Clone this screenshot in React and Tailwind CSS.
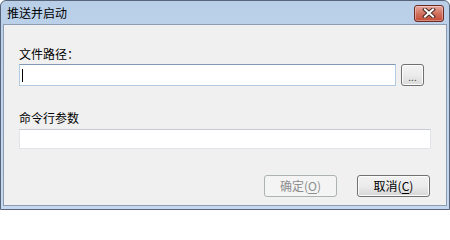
import React from "react";

const font = { fontFamily: '"Microsoft YaHei", "Noto Sans CJK SC", "Noto Sans", sans-serif' };

function CloseButton() {
  return (
    <div className="w-[30px] h-[17px] rounded-[3px] border border-[#6b2a22] bg-gradient-to-b from-[#e6a89c] via-[#d2705f] to-[#c24a35] flex items-center justify-center shadow-[inset_0_0_0_1px_rgba(255,255,255,0.35)]">
      <svg width="14" height="10" viewBox="0 0 14 10">
        <path d="M3 1.5 L11 8.5 M11 1.5 L3 8.5" stroke="#4a2a26" strokeWidth="4" strokeLinecap="square" />
        <path d="M3 1.5 L11 8.5 M11 1.5 L3 8.5" stroke="#ffffff" strokeWidth="2" strokeLinecap="square" />
      </svg>
    </div>
  );
}

export default function App() {
  return (
    <div
      className="w-[450px] h-[210px] flex flex-col bg-gradient-to-b from-[#b9cfe8] to-[#c6d8ee] border border-[#56657a] rounded-t-[6px] overflow-hidden text-[12px] text-black"
      style={font}
    >
      <div className="h-[23px] flex items-center justify-between pl-[6px] pr-[5px] pt-[1px]">
        <span className="leading-[16px] text-[12px]">推送并启动</span>
        <CloseButton />
      </div>
      <div className="flex-1 mx-[2px] mb-[3px] border border-[#8c9db3] bg-[#f0f0f0] flex flex-col px-[15px] pt-[21px]">
        <div className="leading-[16px] h-[16px]">文件路径：</div>
        <div className="flex mt-[2px]">
          <div className="w-[377px] h-[22px] bg-white border border-[#b3cbe2] border-t-[#8199b4] flex items-center pl-[2px]">
            <div className="w-[1px] h-[13px] bg-black" />
          </div>
          <div className="ml-[5px] w-[23px] h-[22px] rounded-[3px] border border-[#707070] bg-gradient-to-b from-[#f4f4f4] via-[#ebebeb] to-[#d9d9d9] shadow-[inset_0_0_0_1px_#fcfcfc] flex items-end justify-center pb-[3px]">
            <span className="text-[10px] leading-[10px] text-[#444]">...</span>
          </div>
        </div>
        <div className="leading-[16px] h-[16px] mt-[24px]">命令行参数</div>
        <div className="mt-[3px] h-[20px] bg-white border border-[#e0e3e8] border-t-[#c8ccd2]" />
        <div className="flex justify-end gap-[20px] mt-[26px] pr-[1px]">
          <div className="w-[73px] h-[22px] rounded-[3px] border border-[#adb2b5] bg-[#f4f4f4] flex items-center justify-center text-[#8d8d8d] leading-[16px]">
            确定(<span className="underline underline-offset-[2px]">O</span>)
          </div>
          <div className="w-[73px] h-[22px] rounded-[3px] border border-[#707070] bg-gradient-to-b from-[#f2f2f2] via-[#ebebeb] to-[#d6d6d6] shadow-[inset_0_0_0_1px_#fcfcfc] flex items-center justify-center leading-[16px]">
            取消(<span className="underline underline-offset-[2px]">C</span>)
          </div>
        </div>
      </div>
    </div>
  );
}
